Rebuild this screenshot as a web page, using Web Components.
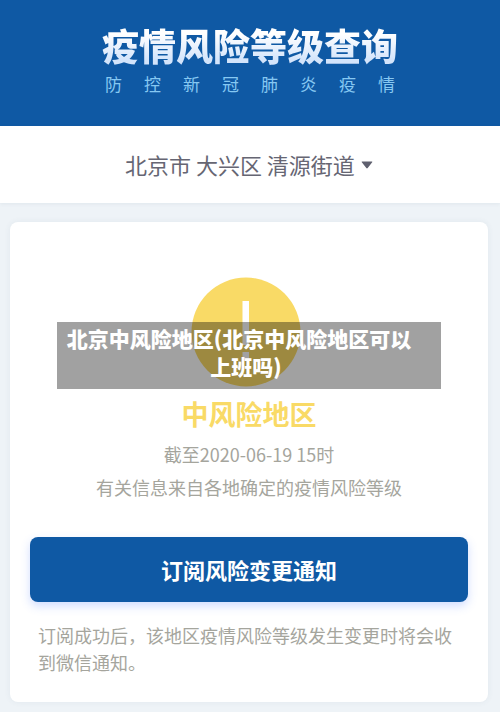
<!DOCTYPE html>
<html lang="zh-CN">
<head>
<meta charset="utf-8">
<meta name="viewport" content="width=device-width, initial-scale=1">
<title>疫情风险等级查询</title>
<style>
  body {
    margin: 0;
    background: #eef3f7;
    font-family: "Noto Sans CJK SC", "Noto Sans", sans-serif;
  }
</style>
</head>
<body>
<risk-page>
  <risk-header slot="header">疫情风险等级查询<span slot="subtitle">防控新冠肺炎疫情</span></risk-header>
  <area-picker slot="picker" value="北京市 大兴区 清源街道"></area-picker>
  <risk-card>
    <risk-level color="#f9da66">
      中风险地区
      <span slot="time">截至2020-06-19 15时</span>
      <span slot="source">有关信息来自各地确定的疫情风险等级</span>
    </risk-level>
    <subscribe-box>
      订阅风险变更通知
      <span slot="hint">订阅成功后，该地区疫情风险等级发生变更时将会收到微信通知。</span>
    </subscribe-box>
  </risk-card>
  <caption-banner slot="banner">北京中风险地区(北京中风险地区可以上班吗)</caption-banner>
</risk-page>

<script>
class BaseElement extends HTMLElement {
  constructor() {
    super();
    this.attachShadow({ mode: 'open' });
  }
  connectedCallback() {
    const template = document.createElement('template');
    template.innerHTML = this.getStyles() + this.getMarkup();
    this.shadowRoot.replaceChildren(template.content.cloneNode(true));
  }
}

class RiskPage extends BaseElement {
  getMarkup() {
    return `
      <slot name="header"></slot>
      <slot name="picker"></slot>
      <main><slot></slot></main>
      <slot name="banner"></slot>
    `;
  }
  getStyles() {
    return `
    <style>
    :host{
      display: block;
      position: relative;
    }
    main{
      padding: 19px 12px 10px 10px;
    }
    </style>
    `;
  }
}
customElements.define('risk-page', RiskPage);

class RiskHeader extends BaseElement {
  getMarkup() {
    return `
      <header>
        <div class="titles">
          <h1><slot></slot></h1>
          <p><slot name="subtitle"></slot></p>
        </div>
      </header>
    `;
  }
  getStyles() {
    return `
    <style>
    :host{
      display: block;
      background: #0f59a4;
    }
    header{
      display: flex;
      justify-content: center;
      padding: 23px 0 30px;
    }
    h1{
      margin: 0;
      font-size: 37px;
      font-weight: 900;
      line-height: 44px;
      color: transparent;
      background: linear-gradient(#fff 25%, #d3e4fb 85%);
      -webkit-background-clip: text;
      background-clip: text;
    }
    p{
      margin: 5px 0 0;
      padding: 0 3px;
      font-size: 17px;
      line-height: 24px;
      color: #86c8f2;
      text-align-last: justify;
    }
    </style>
    `;
  }
}
customElements.define('risk-header', RiskHeader);

class AreaPicker extends BaseElement {
  getMarkup() {
    return `
      <label>
        <select aria-label="选择地区"><option>${this.getAttribute('value')}</option></select>
        <svg width="12" height="8" viewBox="0 0 12 8" aria-hidden="true">
          <path d="M1.2 0.5h9.6q1 0 .4.8L6.7 7q-.7.8-1.4 0L.8 1.3q-.6-.8.4-.8z" fill="#5f606f"/>
        </svg>
      </label>
    `;
  }
  getStyles() {
    return `
    <style>
    :host{
      display: block;
      background: #fff;
      box-shadow: 0 1px 4px rgba(60, 90, 110, .08);
    }
    label{
      display: flex;
      align-items: center;
      justify-content: center;
      gap: 6px;
      padding: 22px 2px 22px 0;
    }
    select{
      appearance: none;
      margin: 0;
      padding: 0;
      border: 0;
      background: none;
      color: #666673;
      font: inherit;
      font-size: 22px;
      line-height: 33px;
    }
    </style>
    `;
  }
}
customElements.define('area-picker', AreaPicker);

class RiskCard extends BaseElement {
  getMarkup() {
    return `<slot></slot>`;
  }
  getStyles() {
    return `
    <style>
    :host{
      display: block;
      padding: 55px 20px 26px;
      border-radius: 8px;
      background: #fff;
      box-shadow: 0 0 6px rgba(60, 90, 110, .07);
    }
    </style>
    `;
  }
}
customElements.define('risk-card', RiskCard);

class RiskLevel extends BaseElement {
  getMarkup() {
    return `
      <svg width="110" height="110" viewBox="0 0 110 110" aria-hidden="true">
        <circle cx="55" cy="55" r="54.5"/>
        <path d="M51.5 24h6.5v44h-6.5zM51.5 75h6.5v7h-6.5z" fill="#fff"/>
      </svg>
      <h2><slot></slot></h2>
      <p><slot name="time"></slot></p>
      <p><slot name="source"></slot></p>
    `;
  }
  getStyles() {
    const color = this.getAttribute('color');
    return `
    <style>
    :host{
      display: block;
      text-align: center;
    }
    svg{
      display: block;
      margin: 0 auto;
      padding-right: 6px;
      fill: ${color};
    }
    h2{
      margin: 7px 0 4px;
      font-size: 27px;
      line-height: 40px;
      color: ${color};
    }
    p{
      margin: 0;
      font-size: 18px;
      line-height: 33px;
      color: #a5a59d;
    }
    </style>
    `;
  }
}
customElements.define('risk-level', RiskLevel);

class SubscribeBox extends BaseElement {
  getMarkup() {
    return `
      <button type="button"><slot></slot></button>
      <p><slot name="hint"></slot></p>
    `;
  }
  getStyles() {
    return `
    <style>
    :host{
      display: block;
      margin-top: 33px;
    }
    button{
      display: block;
      width: 100%;
      padding: 16px 0;
      border: 0;
      border-radius: 8px;
      background: #0f59a4;
      box-shadow: 0 4px 10px rgba(70, 120, 255, .25);
      color: #fff;
      font: inherit;
      font-size: 22px;
      font-weight: 700;
      line-height: 33px;
      cursor: pointer;
    }
    p{
      margin: 20px 0 0;
      padding: 0 8px;
      font-size: 18px;
      line-height: 27px;
      color: #a5a59d;
    }
    </style>
    `;
  }
}
customElements.define('subscribe-box', SubscribeBox);

class CaptionBanner extends BaseElement {
  getMarkup() {
    return `<slot></slot>`;
  }
  getStyles() {
    return `
    <style>
    :host{
      position: absolute;
      top: 322px;
      left: 57px;
      right: 59px;
      padding: 2px 26px 9px 20px;
      background: rgba(0, 0, 0, .37);
      color: #fff;
      font-size: 21px;
      font-weight: 900;
      line-height: 28px;
      text-align: center;
      text-indent: -14px;
    }
    </style>
    `;
  }
}
customElements.define('caption-banner', CaptionBanner);
</script>
</body>
</html>
